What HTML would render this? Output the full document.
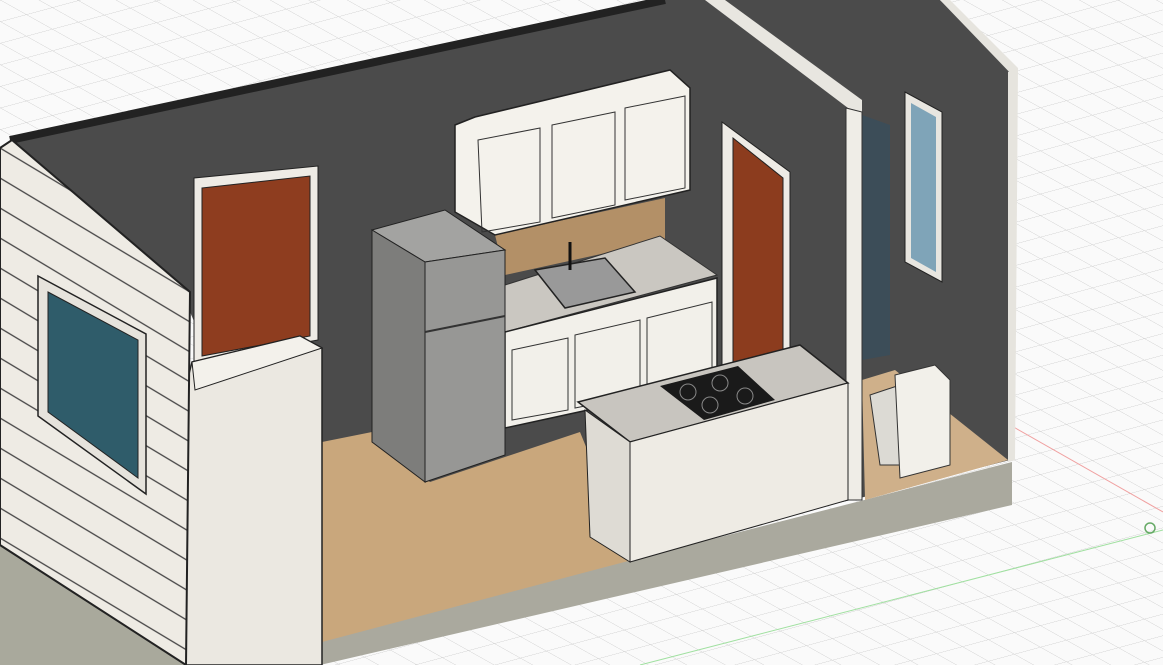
<!DOCTYPE html>
<html><head><meta charset="utf-8"><style>
html,body{margin:0;padding:0;background:#fff;overflow:hidden}
svg{display:block}
</style></head><body>
<svg width="1163" height="665" viewBox="0 0 1163 665" xmlns="http://www.w3.org/2000/svg">
<defs>
<pattern id="g" width="26" height="26" patternUnits="userSpaceOnUse" patternTransform="matrix(1 0.56 1 -0.27 0 0)">
<path d="M0 0H26M0 0V26" stroke="#c8c8c8" stroke-width="0.9" fill="none"/>
</pattern>
<pattern id="sid" width="40" height="30" patternUnits="userSpaceOnUse" patternTransform="matrix(1 0.6 0 1 0 0)">
<rect width="40" height="30" fill="#eeebe4"/>
<path d="M0 28H40" stroke="#444" stroke-width="1.5"/>
</pattern>
</defs>
<rect width="1163" height="665" fill="#fafafa"/>
<rect width="1163" height="665" fill="url(#g)"/>
<line x1="1010" y1="425" x2="1163" y2="512" stroke="#f0a0a0" stroke-width="1"/>
<line x1="640" y1="665" x2="1163" y2="530" stroke="#a0e0a0" stroke-width="1"/>
<circle cx="1150" cy="528" r="5" fill="none" stroke="#6a6" stroke-width="1.5"/>

<polygon points="0,540 185,650 185,665 0,665" fill="#a9a99c"/>
<polygon points="320,640 1012,462 1012,505 320,665" fill="#aaa99e"/>
<polygon points="10,140 665,0 940,0 1015,70 1010,460 860,498 320,620 185,300" fill="#4b4b4b"/>
<path d="M10,140 L665,0" stroke="#222" stroke-width="8"/>
<polygon points="705,0 725,0 862,100 862,112 848,108" fill="#e8e6e0"/>
<polygon points="940,0 950,0 1018,68 1015,78" fill="#e6e4de"/>
<polygon points="1008,72 1018,68 1015,460 1008,462" fill="#e6e4de"/>
<polygon points="862,115 890,125 890,355 862,360" fill="#3c4d58"/>
<polygon points="862,380 895,370 1008,460 865,500" fill="#cfb08a"/>
<polygon points="846,108 862,112 862,500 846,500" fill="#efede7" stroke="#333" stroke-width="1"/>
<polygon points="905,92 942,112 942,282 905,262" fill="#e8e6e0" stroke="#222"/>
<polygon points="911,103 936,117 936,272 911,258" fill="#7fa4b8"/>
<polygon points="870,395 900,385 905,465 880,465" fill="#dcdad4" stroke="#333"/>
<polygon points="895,375 935,365 950,380 950,465 900,478" fill="#f2f0ea" stroke="#333"/>
<polygon points="322,442 372,432 430,482 580,432 632,560 322,642" fill="#c9a77c"/>
<polygon points="495,235 665,198 665,240 505,275" fill="#b39067"/>
<polygon points="455,125 475,117 670,70 690,88 690,190 495,235 455,212" fill="#f4f2ec" stroke="#222" stroke-width="1.5"/>
<polygon points="478,140 540,128 540,222 482,232" fill="none" stroke="#333"/>
<polygon points="552,125 615,112 615,205 552,218" fill="none" stroke="#333"/>
<polygon points="625,108 685,96 685,188 625,200" fill="none" stroke="#333"/>
<polygon points="505,285 660,236 717,275 505,332" fill="#cac7c1" stroke="#333"/>
<polygon points="535,270 605,258 635,292 565,308" fill="#999" stroke="#222" stroke-width="1.5"/>
<path d="M570,242 V270" stroke="#111" stroke-width="3"/>
<polygon points="505,332 717,278 717,382 505,428" fill="#f2f0ea" stroke="#222" stroke-width="1.5"/>
<polygon points="512,350 568,338 568,410 512,420" fill="none" stroke="#333"/>
<polygon points="575,335 640,320 640,395 575,408" fill="none" stroke="#333"/>
<polygon points="647,318 712,302 712,380 647,393" fill="none" stroke="#333"/>
<polygon points="372,230 445,210 505,250 425,262" fill="#a3a3a1" stroke="#222"/>
<polygon points="372,230 425,262 425,482 372,442" fill="#7d7d7b" stroke="#222"/>
<polygon points="425,262 505,250 505,455 425,482" fill="#979795" stroke="#222"/>
<path d="M425,332 L505,316" stroke="#333" stroke-width="2"/>
<polygon points="194,178 318,166 318,340 194,362" fill="#eeebe5" stroke="#222"/>
<polygon points="202,188 310,176 310,336 202,356" fill="#8e3d1f" stroke="#222"/>
<polygon points="722,122 790,172 790,362 722,368" fill="#eeebe5" stroke="#222"/>
<polygon points="733,138 783,178 783,358 733,364" fill="#8c3c1e" stroke="#222"/>
<polygon points="578,402 800,345 848,383 630,442" fill="#c8c5bf" stroke="#222" stroke-width="1.5"/>
<polygon points="660,386 738,366 775,400 704,420" fill="#1a1a1a"/>
<circle cx="688" cy="392" r="8" fill="none" stroke="#888"/>
<circle cx="720" cy="383" r="8" fill="none" stroke="#888"/>
<circle cx="710" cy="405" r="8" fill="none" stroke="#888"/>
<circle cx="745" cy="396" r="8" fill="none" stroke="#888"/>
<polygon points="585,410 630,442 630,562 590,537" fill="#dedbd4" stroke="#222"/>
<polygon points="630,442 848,383 848,500 630,562" fill="#eeebe4" stroke="#222"/>
<polygon points="192,362 300,336 322,348 322,665 185,665 185,390" fill="#ebe8e1" stroke="#222" stroke-width="1.5"/>
<polygon points="192,362 300,336 322,348 195,390" fill="#f3f1eb" stroke="#222"/>
<polygon points="0,148 12,140 190,292 186,665 0,545" fill="url(#sid)" stroke="#222" stroke-width="2"/>
<polygon points="38,276 146,334 146,494 38,416" fill="#e6e3dc" stroke="#222" stroke-width="1.5"/>
<polygon points="48,292 138,340 138,478 48,412" fill="#2f5c6a" stroke="#222"/>
</svg>
</body></html>
